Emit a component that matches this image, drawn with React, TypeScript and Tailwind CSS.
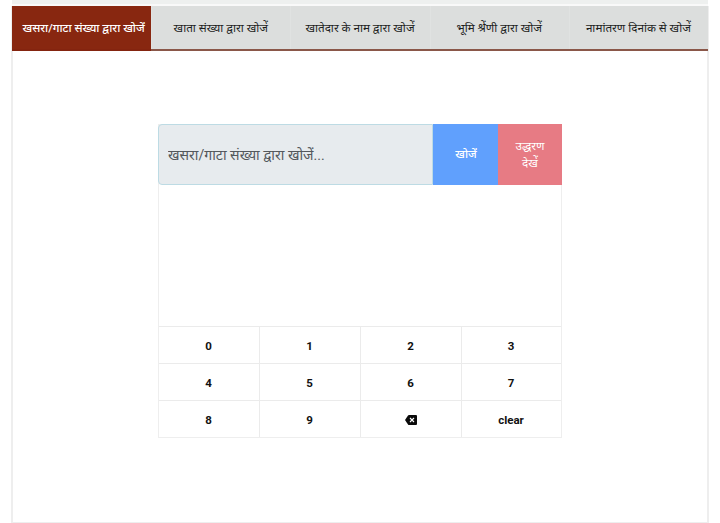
import React from "react";

const tabs = [
  "खसरा/गाटा संख्या द्वारा खोजें",
  "खाता संख्या द्वारा खोजें",
  "खातेदार के नाम द्वारा खोजें",
  "भूमि श्रेंणी द्वारा खोजें",
  "नामांतरण दिनांक से खोजें",
];

const keys = ["0", "1", "2", "3", "4", "5", "6", "7", "8", "9", "back", "clear"];

function Backspace() {
  return (
    <svg className="-mt-px h-[10px] w-3" viewBox="0 0 12 10" aria-label="backspace">
      <path d="M4 0h7a1 1 0 0 1 1 1v8a1 1 0 0 1-1 1H4Q3.400 10 3 9.500L0 5 3 .500Q3.400 0 4 0Z" fill="#0a0a0a" />
      <path d="M5 3l4 4m0-4l-4 4" stroke="#fff" strokeWidth="1.100" fill="none" />
    </svg>
  );
}

export default function App() {
  return (
    <div className="flex h-[523px] w-[720px] flex-col overflow-hidden bg-white font-['Roboto','Noto_Sans','Noto_Sans_Devanagari',sans-serif]">
      <div className="ml-3 h-[6px] w-[696px] shrink-0 border-b-2 border-[#f9f9f9] bg-[#eef0ef]" />
      <main className="ml-[11px] flex w-[698px] grow flex-col border-x-2 border-b border-[#eeeeee]">
        <nav className="-mx-px grid h-[45px] shrink-0 grid-cols-5 border-b-2 border-[#8a5749] bg-[#dcdedd]">
          {tabs.map((tab, i) => (
            <button
              key={tab}
              className={
                i === 0
                  ? "-mb-[2px] whitespace-nowrap border-b-2 border-[#84240f] bg-[#882710] pl-[4px] pt-[2px] text-[11.600px] font-medium text-white"
                  : "whitespace-nowrap border-l border-[#e0e2e1] pr-[1px] pt-[2px] text-[11.700px] text-[#1e1e1e]"
              }
            >
              {tab}
            </button>
          ))}
        </nav>
        <section className="ml-[145px] mt-[73px] w-[404px] border border-[#eeeeee]">
          <div className="-mx-px -mt-px flex h-[61px]">
            <input
              className="w-[275px] rounded-l border border-[#bddbe4] bg-[#e7ebee] px-[9px] pt-[3px] text-[14.100px] text-[#3c4043] outline-none placeholder:text-[#53585c] placeholder:opacity-100"
              placeholder="खसरा/गाटा संख्या द्वारा खोजें..."
            />
            <button className="w-[65px] bg-[#60a0fd] pl-px text-[11.500px] font-medium text-white">खोजें</button>
            <button className="w-[64px] bg-[#e77b84] px-3 pt-px text-[11.700px] leading-[17px] text-white">
              उद्धरण देखें
            </button>
          </div>
          <div className="h-[141px]" />
          <div className="grid grid-cols-[101px_101px_101px_99px]">
            {keys.map((key) => (
              <button
                key={key}
                className="flex h-[37px] items-center justify-center border-t border-r border-[#ebebeb] pr-px pt-[3px] text-[11.500px] font-bold text-[#111] nth-[4n]:border-r-0"
              >
                {key === "back" ? <Backspace /> : key}
              </button>
            ))}
          </div>
        </section>
      </main>
    </div>
  );
}
